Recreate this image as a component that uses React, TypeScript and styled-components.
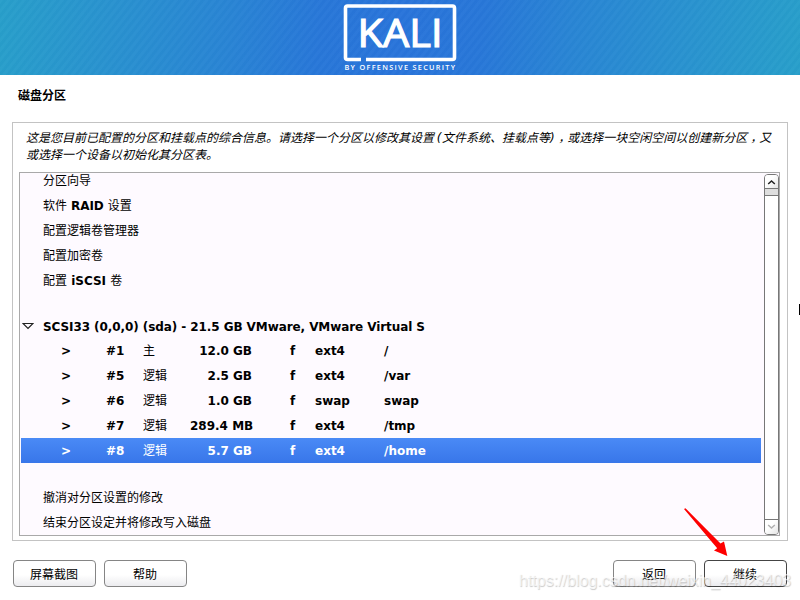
import React from "react";
import styled, { createGlobalStyle } from "styled-components";

const GlobalStyle = createGlobalStyle`
  * { box-sizing: border-box; }
  body {
    margin: 0;
    background: #fff;
    color: #000;
    font: 12px/16px "Noto Sans CJK SC", sans-serif;
    overflow: hidden;
  }
`;

const Screen = styled.div`
  position: relative;
  width: 800px;
  height: 600px;
  display: flex;
  flex-direction: column;
  overflow: hidden;
  background: #fff;
`;

const Banner = styled.header`
  height: 75px;
  flex: none;
  display: flex;
  justify-content: center;
  background:
    repeating-linear-gradient(128deg, rgba(255, 255, 255, 0.02) 0 2px, rgba(0, 30, 90, 0.015) 3px 5px, rgba(255, 255, 255, 0.02) 6px),
    linear-gradient(97deg, #289fca 0%, #2992cf 14%, #2984d4 29%, #2877d8 40%, #2974da 50%, #2877d8 60%, #2985d4 71%, #2993cf 86%, #289fca 100%);
`;

const Title = styled.h1`
  margin: 12px 0 0 18px;
  height: 35px;
  font-size: 12px;
  line-height: 16px;
  font-weight: 700;
`;

const Panel = styled.section`
  margin: 0 12px;
  height: 419px;
  padding: 5px 7px 4px 6px;
  border: 1px solid #c3c3c3;
  display: flex;
  flex-direction: column;
`;

const Description = styled.p`
  margin: 0 0 0 7px;
  height: 44px;
  font-style: italic;
  line-height: 17px;
  white-space: nowrap;
`;

const Paren = styled.span`
  font-family: "DejaVu Sans", sans-serif;
  line-height: 0;
  letter-spacing: 0.6px;
`;

const Comma = styled.span`
  padding-left: 3px;
  margin-right: -3px;
`;

const ListFrame = styled.div`
  width: 761px;
  height: 364px;
  border: 1px solid #a9a9a9;
  background: #fefaff;
  display: flex;
  justify-content: space-between;
  padding: 0 0 0 1px;
  overflow: hidden;
`;

const List = styled.div`
  width: 740px;
  margin-top: -5px;
`;

const Row = styled.div<{ $gap?: number }>`
  height: 25px;
  margin-bottom: ${(p) => p.$gap ?? 0}px;
  padding-left: 22px;
  line-height: 23px;
  white-space: pre;
`;

const Latin = styled.span<{ $spacing?: number }>`
  font-family: "DejaVu Sans", sans-serif;
  font-weight: 700;
  letter-spacing: ${(p) => p.$spacing ?? 0}px;
`;

const DiskRow = styled(Row)`
  display: flex;
  align-items: center;
  padding: 3px 0 0 1px;
`;

const Expander = styled.svg`
  width: 12px;
  height: 8px;
  margin: -2px 9px 0 0;
`;

const PartitionRow = styled(Row)<{ $selected: boolean }>`
  display: grid;
  grid-template-columns: 45px 37px 47px 62px 38px 25px 69px 1fr;
  padding-left: 40px;
  color: ${(p) => (p.$selected ? "#fff" : "#000")};
  background: ${(p) => (p.$selected ? "linear-gradient(#4a8af6, #3876e9)" : "none")};

  ${Latin} {
    line-height: 27px;
  }
`;

const Size = styled(Latin)`
  text-align: right;
`;

const ScrollBar = styled.div`
  width: 15px;
  height: 361px;
  margin-top: 1px;
  border: 1px solid #777;
  border-radius: 4px;
  background: #fff;
  display: flex;
  flex-direction: column;
  overflow: hidden;
`;

const ScrollButton = styled.div<{ $disabled?: boolean }>`
  height: ${(p) => (p.$disabled ? 15 : 13)}px;
  flex: none;
  display: flex;
  align-items: center;
  justify-content: center;
  background: linear-gradient(135deg, #fff 40%, #e4e4e4);
  border-top: ${(p) => (p.$disabled ? "1px solid #777" : "none")};
  color: ${(p) => (p.$disabled ? "#b0b0b0" : "#222")};
`;

const Thumb = styled.div`
  height: 8px;
  flex: none;
  background: #dedede;
  border: solid #777;
  border-width: 1px 0;
`;

const Track = styled.div`
  flex: 1;
`;

const Footer = styled.footer`
  display: flex;
  gap: 8px;
  margin: 19px 13px 0 13px;
`;

const Spacer = styled.div`
  flex: 1;
`;

const Button = styled.button<{ $focused?: boolean }>`
  width: 83px;
  height: 27px;
  padding: 0 1px 0 0;
  border: 1px solid ${(p) => (p.$focused ? "#444" : "#858585")};
  border-radius: 4px;
  background: linear-gradient(#fff 55%, #ececef);
  color: #000;
  font: 400 12px/23px "Noto Sans CJK SC", sans-serif;
`;

const Arrow = styled.svg`
  position: absolute;
  left: 680px;
  top: 504px;
`;

const Watermark = styled.div`
  position: absolute;
  left: 519px;
  top: 571px;
  font: 16px/20px "Liberation Sans", sans-serif;
  color: rgba(255, 255, 255, 0.65);
  text-shadow: 0.5px 0.5px 1px rgba(0, 0, 0, 0.22);
  white-space: nowrap;
`;

const Cursor = styled.div`
  position: absolute;
  left: 799px;
  top: 304px;
  width: 1px;
  height: 11px;
  background: #000;
`;

const partitions = [
  { id: "#1", kind: "主", size: "12.0 GB", fs: "ext4", mount: "/" },
  { id: "#5", kind: "逻辑", size: "2.5 GB", fs: "ext4", mount: "/var" },
  { id: "#6", kind: "逻辑", size: "1.0 GB", fs: "swap", mount: "swap" },
  { id: "#7", kind: "逻辑", size: "289.4 MB", fs: "ext4", mount: "/tmp" },
  { id: "#8", kind: "逻辑", size: "5.7 GB", fs: "ext4", mount: "/home" },
];

function Logo() {
  return (
    <svg width="120" height="75" viewBox="340 0 120 75" fill="#fff">
      <path d="M361 59.5H347.5Q345.5 59.5 345.5 57.5V8Q345.5 6 347.5 6H452.5Q454.5 6 454.5 8V57.5Q454.5 59.5 452.5 59.5H366" fill="none" stroke="#fff" strokeWidth="3.6" />
      <text x="357.5" y="47" fontFamily="Open Sans" fontSize="38.5" fontWeight="500" textLength="85" lengthAdjust="spacingAndGlyphs" stroke="#fff" strokeWidth="1.2">KALI</text>
      <text x="344.5" y="70" fontFamily="Open Sans" fontSize="7.3" fontWeight="600" textLength="110.5">BY OFFENSIVE SECURITY</text>
    </svg>
  );
}

function Chevron({ down }: { down?: boolean }) {
  return (
    <svg width="9" height="6" viewBox="0 0 9 6" fill="none" stroke="currentColor" strokeWidth="1.5">
      <path d={down ? "M1.2 1L4.5 4L7.8 1" : "M1.2 5L4.5 2L7.8 5"} />
    </svg>
  );
}

export default function App() {
  return (
    <Screen>
      <GlobalStyle />
      <Banner><Logo /></Banner>
      <Title>磁盘分区</Title>
      <Panel>
        <Description>
          这是您目前已配置的分区和挂载点的综合信息。请选择一个分区以修改其设置 <Paren>(</Paren>文件系统、挂载点等<Paren>)</Paren><Comma>，</Comma>或选择一块空闲空间以创建新分区<Comma>，</Comma>又
          <br />
          或选择一个设备以初始化其分区表。
        </Description>
        <ListFrame>
          <List>
            <Row>分区向导</Row>
            <Row>软件<Latin $spacing={-0.1}> RAID </Latin>设置</Row>
            <Row>配置逻辑卷管理器</Row>
            <Row>配置加密卷</Row>
            <Row $gap={20}>配置<Latin> iSCSI </Latin>卷</Row>
            <DiskRow>
              <Expander viewBox="0 0 12 8" fill="none" stroke="#222" strokeWidth="1.2">
                <path d="M1 1.5H11L6 6.5Z" />
              </Expander>
              <Latin $spacing={-0.08}>SCSI33 (0,0,0) (sda) - 21.5 GB VMware, VMware Virtual S</Latin>
            </DiskRow>
            {partitions.map((p) => (
              <PartitionRow key={p.id} $selected={p.id === "#8"} $gap={p.id === "#8" ? 22 : 0}>
                <Latin>&gt;</Latin>
                <Latin>{p.id}</Latin>
                <span>{p.kind}</span>
                <Size>{p.size}</Size>
                <span />
                <Latin>f</Latin>
                <Latin>{p.fs}</Latin>
                <Latin>{p.mount}</Latin>
              </PartitionRow>
            ))}
            <Row>撤消对分区设置的修改</Row>
            <Row>结束分区设定并将修改写入磁盘</Row>
          </List>
          <ScrollBar>
            <ScrollButton><Chevron /></ScrollButton>
            <Thumb />
            <Track />
            <ScrollButton $disabled><Chevron down /></ScrollButton>
          </ScrollBar>
        </ListFrame>
      </Panel>
      <Footer>
        <Button>屏幕截图</Button>
        <Button>帮助</Button>
        <Spacer />
        <Button>返回</Button>
        <Button $focused>继续</Button>
      </Footer>
      <Watermark>https://blog.csdn.net/weixin_44023403</Watermark>
      <Arrow width="50" height="55" viewBox="680 504 50 55">
        <path d="M684 509L685.5 508.3L720.5 543.5L724 541.5L727.3 556L714 550.5L717.2 548.3Z" fill="#fe0000" />
      </Arrow>
      <Cursor />
    </Screen>
  );
}
